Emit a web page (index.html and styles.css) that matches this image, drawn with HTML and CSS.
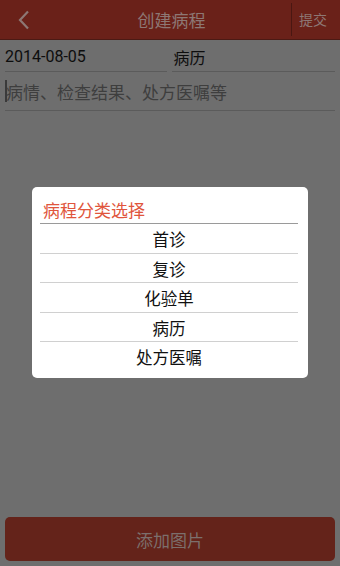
FILE: index.html
```html
<!DOCTYPE html>
<html lang="zh-CN">
  <head>
    <meta charset="utf-8" />
    <meta name="viewport" content="width=device-width, initial-scale=1.0" />
    <title>创建病程</title>
    <link rel="stylesheet" href="styles.css">
  </head>
  <body>
    <div class="app">
      <div class="header">
        <div class="back">
          <svg width="14" height="20" viewBox="0 0 14 20">
            <path d="M11 1.5 L3 10 L11 18.5" fill="none" stroke="#8d7774" stroke-width="2.2" />
          </svg>
        </div>
        <div class="title">创建病程</div>
        <div class="submit">提交</div>
      </div>

      <div class="form">
        <div class="row">
          <div class="field date">2014-08-05</div>
          <div class="field kind">病历</div>
        </div>
        <div class="note">
          <span class="cursor"></span>
          <span class="placeholder">病情、检查结果、处方医嘱等</span>
        </div>
      </div>

      <div class="spacer"></div>

      <div class="footer">
        <button class="add">添加图片</button>
      </div>

      <div class="modal">
        <div class="dialog">
          <div class="dialog-title">病程分类选择</div>
          <div class="options">
            <div class="option">首诊</div>
            <div class="option">复诊</div>
            <div class="option">化验单</div>
            <div class="option">病历</div>
            <div class="option">处方医嘱</div>
          </div>
        </div>
      </div>
    </div>
  </body>
</html>
```

FILE: styles.css
```css
html,
body {
  width: 100%;
  height: 100%;
}

body {
  margin: 0;
  font-family: Roboto, "Noto Sans CJK SC", sans-serif;
  background-color: #6e6e6e;
}

.app {
  position: relative;
  display: flex;
  flex-direction: column;
  height: 566px;
  overflow: hidden;
}

.header {
  display: flex;
  align-items: center;
  height: 40px;
  background-color: #6a2119;
  border-bottom: 1px solid #4c1a14;
  box-sizing: border-box;
}

.header .back {
  width: 50px;
  display: flex;
  padding-left: 17px;
  box-sizing: border-box;
}

.header .title {
  flex: 1;
  text-align: center;
  font-family: "Noto Sans CJK SC", sans-serif;
  font-size: 17px;
  color: #8d7774;
  margin-left: 2px;
}

.header .submit {
  width: 49px;
  height: 33px;
  line-height: 33px;
  box-sizing: border-box;
  border-left: 1px solid #4a1712;
  font-family: "Noto Sans CJK SC", sans-serif;
  font-size: 14px;
  color: #8d7774;
  padding-left: 7px;
}

.form {
  padding: 0 5px;
}

.row {
  display: flex;
  gap: 5px;
  padding-top: 4px;
}

.field {
  flex: 1;
  height: 27px;
  line-height: 26px;
  border-bottom: 1px solid #5b5b5b;
  font-size: 16px;
  color: #0d0d0d;
}

.field.kind {
  font-family: "Noto Sans CJK SC", sans-serif;
  font-size: 16px;
  padding-left: 2px;
}

.note {
  display: flex;
  align-items: center;
  height: 38px;
  border-bottom: 1px solid #5b5b5b;
}

.cursor {
  width: 2px;
  height: 22px;
  background-color: #3a3a3a;
  margin-right: -1px;
}

.placeholder {
  font-family: "Noto Sans CJK SC", sans-serif;
  font-size: 17px;
  color: #3e3e3e;
}

.spacer {
  flex: 1;
}

.footer {
  padding: 0 5px 5px;
}

.add {
  width: 100%;
  height: 44px;
  border: none;
  border-radius: 5px;
  background-color: #64231a;
  color: #7c6f6c;
  font-family: "Noto Sans CJK SC", sans-serif;
  font-size: 17px;
}

.modal {
  position: absolute;
  top: 187px;
  left: 32px;
  right: 32px;
}

.dialog {
  background-color: #fff;
  border-radius: 5px;
  padding: 0 10px 6px 8px;
}

.dialog-title {
  height: 37px;
  line-height: 46px;
  box-sizing: border-box;
  padding-left: 3px;
  border-bottom: 1.5px solid #9a9a9a;
  font-family: "Noto Sans CJK SC", sans-serif;
  font-size: 17px;
  color: #e0553c;
}

.option {
  height: 29.5px;
  line-height: 30px;
  box-sizing: border-box;
  text-align: center;
  border-bottom: 1px solid #d0d0d0;
  font-family: "Noto Sans CJK SC", sans-serif;
  font-size: 16.5px;
  color: #111;
}

.option:last-child {
  border-bottom: none;
}
```
